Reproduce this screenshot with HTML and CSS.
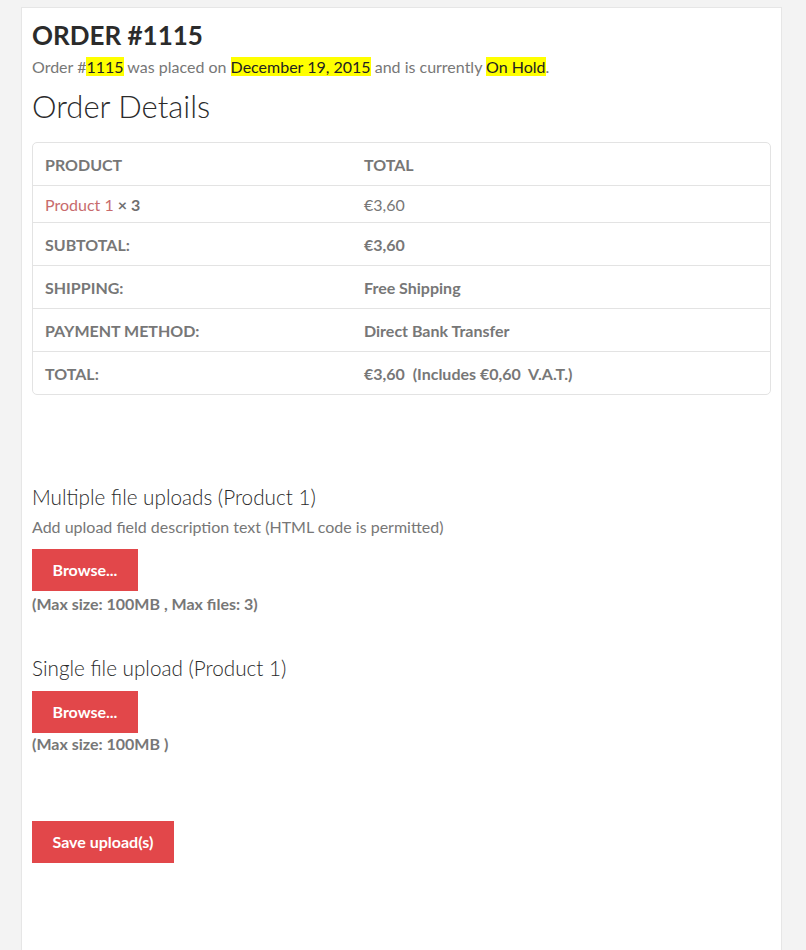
FILE: index.html
```html
<!DOCTYPE html>
<html lang="en">
<head>
<meta charset="utf-8">
<title>Order #1115</title>
<link rel="stylesheet" href="styles.css">
</head>
<body>
<div class="page">
  <div class="card">
    <h1 class="order-title">ORDER #1115</h1>
    <p class="order-meta">Order #<mark>1115</mark> was placed on <mark>December 19, 2015</mark> and is currently <mark>On Hold</mark>.</p>
    <h2 class="section-title">Order Details</h2>
    <div class="table-wrap">
      <table class="order-table">
        <thead>
          <tr><th class="col-a">PRODUCT</th><th>TOTAL</th></tr>
        </thead>
        <tbody>
          <tr class="item-row"><td class="col-a"><a class="product-link" href="#">Product 1</a> <strong>× 3</strong></td><td>€3,60</td></tr>
        </tbody>
        <tfoot>
          <tr><th class="col-a">SUBTOTAL:</th><td class="bold">€3,60</td></tr>
          <tr><th class="col-a">SHIPPING:</th><td class="bold">Free Shipping</td></tr>
          <tr><th class="col-a">PAYMENT METHOD:</th><td class="bold">Direct Bank Transfer</td></tr>
          <tr><th class="col-a">TOTAL:</th><td class="bold">€3,60&nbsp; (Includes €0,60&nbsp; V.A.T.)</td></tr>
        </tfoot>
      </table>
    </div>

    <div class="uploads">
      <div class="upload-block">
        <h3 class="upload-title">Multiple file uploads (Product 1)</h3>
        <p class="upload-desc">Add upload field description text (HTML code is permitted)</p>
        <button class="btn" type="button">Browse...</button>
        <p class="upload-limit">(Max size: 100MB , Max files: 3)</p>
      </div>
      <div class="upload-block single">
        <h3 class="upload-title">Single file upload (Product 1)</h3>
        <button class="btn btn-tight" type="button">Browse...</button>
        <p class="upload-limit limit-tight">(Max size: 100MB )</p>
      </div>
      <button class="btn save" type="button">Save upload(s)</button>
    </div>
  </div>
</div>
</body>
</html>
```

FILE: styles.css
```css
* { box-sizing: border-box; }
html, body { margin: 0; padding: 0; }
body {
  background: #f3f3f3;
  font-family: Lato, "Open Sans", "Liberation Sans", sans-serif;
  color: #777777;
  font-size: 16px;
}
.page {
  padding: 7px 0 0 21px;
}
.card {
  width: 761px;
  min-height: 1000px;
  background: #ffffff;
  border: 1px solid #e6e6e6;
  padding: 12px 10px 40px 10px;
}
.order-title {
  margin: 0;
  font-size: 26px;
  font-weight: 700;
  line-height: 1.2;
  color: #2b2b2b;
}
.order-meta {
  margin: 6px 0 0 0;
  font-size: 16px;
  line-height: 1.2;
  color: #777777;
}
.order-meta mark {
  background: #ffff00;
  color: #222222;
}
.section-title {
  margin: 12px 0 0 0;
  font-size: 31px;
  font-weight: 300;
  line-height: 1.2;
  color: #2b2b2b;
}
.table-wrap {
  margin-top: 16px;
  border: 1px solid #e3e3e3;
  border-radius: 5px;
  overflow: hidden;
}
.order-table {
  width: 100%;
  border-collapse: collapse;
}
.order-table th,
.order-table td {
  text-align: left;
  padding: 12px 12px 11px 12px;
  line-height: 19px;
  font-size: 16px;
  color: #777777;
  border-top: 1px solid #e3e3e3;
  vertical-align: middle;
}
.order-table thead th { border-top: 0; padding-top: 12px; padding-bottom: 11px; }
.order-table th { font-weight: 700; }
.order-table .col-a { width: 319px; }
.order-table .item-row td { padding-top: 9px; padding-bottom: 8px; }
.order-table .bold { font-weight: 700; }
.order-table strong { font-weight: 700; color: #6f6f6f; }
.product-link {
  color: #c86b6d;
  text-decoration: none;
}
.uploads {
  padding-top: 90px;
}
.upload-title {
  margin: 0;
  font-size: 20.7px;
  font-weight: 300;
  line-height: 1.2;
  color: #2b2b2b;
}
.upload-desc {
  margin: 8px 0 0 0;
  line-height: 1.2;
  font-size: 16px;
  color: #777777;
}
.btn {
  display: block;
  height: 42px;
  margin-top: 12px;
  padding: 0 20.5px;
  border: 0;
  border-radius: 0;
  background: #e2474a;
  color: #ffffff;
  font-family: inherit;
  font-size: 16px;
  font-weight: 700;
  line-height: 42px;
  cursor: pointer;
}
.btn-tight { margin-top: 9.5px; }
.upload-limit {
  margin: 3px 0 0 0;
  font-size: 16px;
  line-height: 1.2;
  font-weight: 700;
  color: #777777;
}
.limit-tight { margin-top: 1px; }
.single { margin-top: 43.5px; }
.save { margin-top: 68px; }
```
